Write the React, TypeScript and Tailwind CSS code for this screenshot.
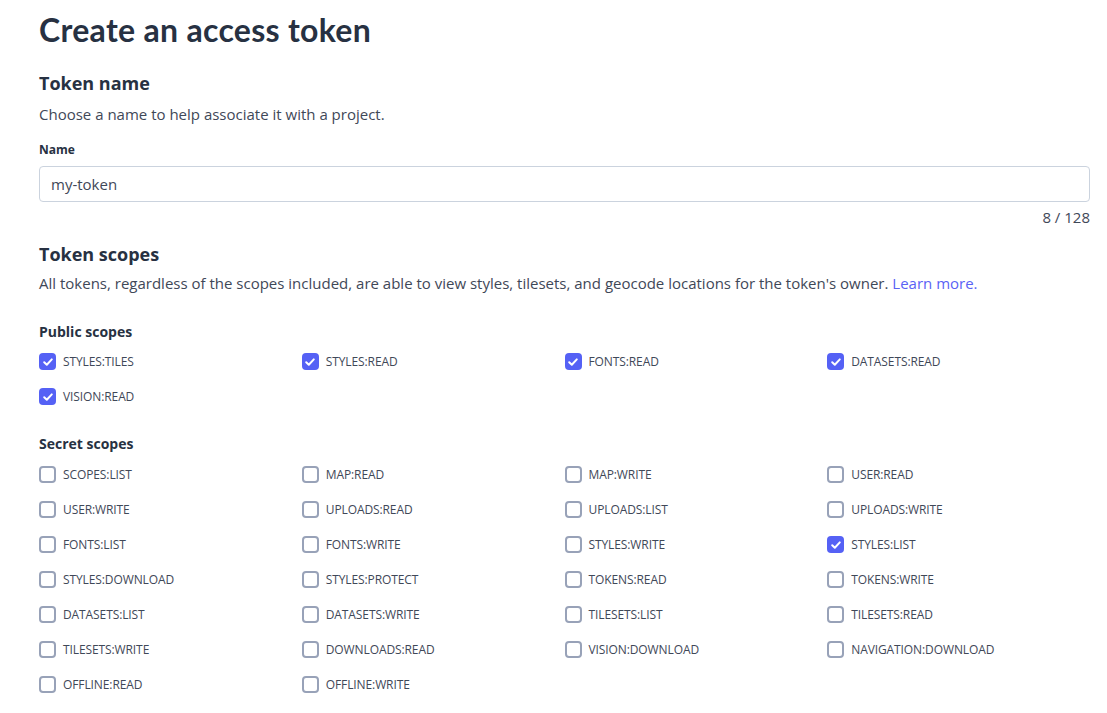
import React, { useState } from "react";

const FONT = { fontFamily: '"Open Sans", "Liberation Sans", sans-serif' };

const publicScopes = ["STYLES:TILES", "STYLES:READ", "FONTS:READ", "DATASETS:READ", "VISION:READ"];

const secretScopes = [
  "SCOPES:LIST", "MAP:READ", "MAP:WRITE", "USER:READ",
  "USER:WRITE", "UPLOADS:READ", "UPLOADS:LIST", "UPLOADS:WRITE",
  "FONTS:LIST", "FONTS:WRITE", "STYLES:WRITE", "STYLES:LIST",
  "STYLES:DOWNLOAD", "STYLES:PROTECT", "TOKENS:READ", "TOKENS:WRITE",
  "DATASETS:LIST", "DATASETS:WRITE", "TILESETS:LIST", "TILESETS:READ",
  "TILESETS:WRITE", "DOWNLOADS:READ", "VISION:DOWNLOAD", "NAVIGATION:DOWNLOAD",
  "OFFLINE:READ", "OFFLINE:WRITE",
];

function ScopeBox({ label, checked, onToggle }: { label: string; checked: boolean; onToggle: () => void }) {
  return (
    <label className="flex items-center h-[35px] cursor-pointer select-none" onClick={onToggle}>
      {checked ? (
        <span className="w-[17px] h-[17px] rounded-[4px] bg-[#5561f5] flex items-center justify-center shrink-0">
          <svg width="12" height="12" viewBox="0 0 12 12" fill="none">
            <path d="M2.2 6.2 L4.8 8.7 L9.8 3.4" stroke="white" strokeWidth="2" strokeLinecap="round" strokeLinejoin="round" />
          </svg>
        </span>
      ) : (
        <span className="w-[17px] h-[17px] rounded-[4px] border-2 border-[#98a2b8] bg-white shrink-0" />
      )}
      <span className="ml-[7px] text-[12px] text-[#3f4858] tracking-[-0.1px]">{label}</span>
    </label>
  );
}

export default function App() {
  const [checked, setChecked] = useState<Record<string, boolean>>({
    "STYLES:TILES": true,
    "STYLES:READ": true,
    "FONTS:READ": true,
    "DATASETS:READ": true,
    "VISION:READ": true,
    "STYLES:LIST": true,
  });
  const [name, setName] = useState("my-token");

  const toggle = (k: string) => setChecked((c) => ({ ...c, [k]: !c[k] }));

  return (
    <div className="min-h-screen bg-white" style={FONT}>
      <div className="pl-[39px] pr-[17px] pt-3">
        <h1 className="text-[32px] leading-[36px] font-bold text-[#273142] tracking-[0.3px]" style={{ fontFamily: '"Lato", "Open Sans", sans-serif' }}>
          Create an access token
        </h1>

        <h2 className="mt-[23px] text-[18px] leading-[24px] font-bold text-[#273142]">Token name</h2>
        <p className="mt-[9px] text-[15px] leading-[20px] text-[#3f4858]">Choose a name to help associate it with a project.</p>

        <div className="mt-[18px] text-[12px] leading-[16px] font-bold text-[#273142]">Name</div>
        <input
          value={name}
          onChange={(e) => setName(e.target.value)}
          className="mt-2 w-full h-[36px] border border-[#cbd3de] rounded-[4px] px-[11px] text-[15px] text-[#3f4858] outline-none"
        />
        <div className="mt-[5px] text-right text-[15px] leading-[20px] text-[#3f4858]">{name.length} / 128</div>

        <h2 className="mt-[15px] text-[18px] leading-[24px] font-bold text-[#273142]">Token scopes</h2>
        <p className="mt-[7px] text-[15px] leading-[20px] text-[#3f4858]">
          All tokens, regardless of the scopes included, are able to view styles, tilesets, and geocode locations for the token's owner.{" "}
          <a className="text-[#5a62f5]" href="#">Learn more.</a>
        </p>

        <h3 className="mt-[29px] text-[14px] leading-[20px] font-bold text-[#273142]">Public scopes</h3>
        <div className="mt-[2px] grid grid-cols-4">
          {publicScopes.map((s) => (
            <ScopeBox key={s} label={s} checked={!!checked[s]} onToggle={() => toggle(s)} />
          ))}
        </div>

        <h3 className="mt-[20px] text-[14px] leading-[20px] font-bold text-[#273142]">Secret scopes</h3>
        <div className="mt-[3px] grid grid-cols-4">
          {secretScopes.map((s) => (
            <ScopeBox key={s} label={s} checked={!!checked[s]} onToggle={() => toggle(s)} />
          ))}
        </div>
      </div>
    </div>
  );
}
